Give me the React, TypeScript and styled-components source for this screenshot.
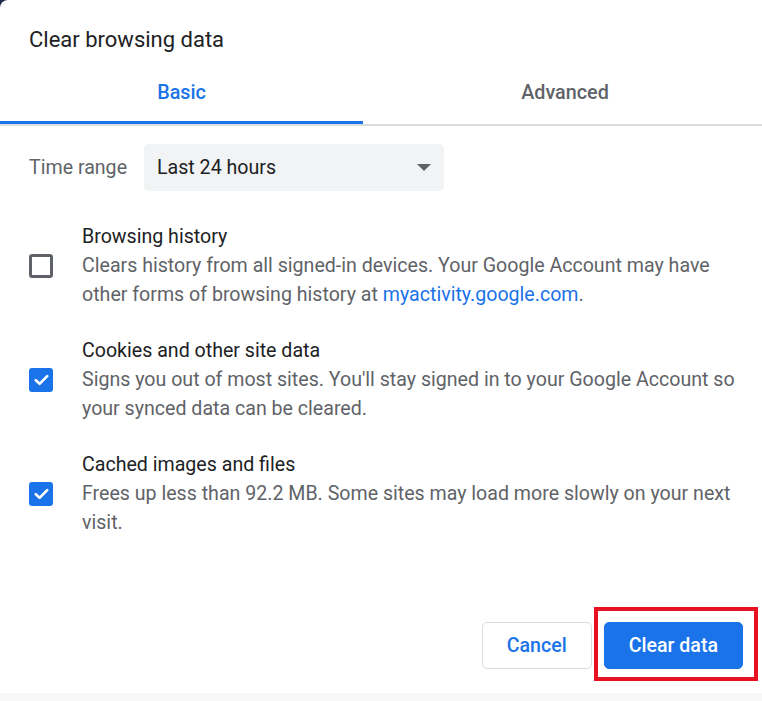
import React, { useState } from 'react';
import styled, { createGlobalStyle } from 'styled-components';

const GlobalStyle = createGlobalStyle`
  html, body {
    margin: 0;
    padding: 0;
    background: #1c2b4b;
  }
  body {
    font-family: Roboto, "Liberation Sans", Arial, sans-serif;
    -webkit-font-smoothing: antialiased;
  }
`;

type Item = {
  id: string;
  title: string;
  description: React.ReactNode;
  checked: boolean;
};

// built lazily so the styled Link below exists by the time this runs
const makeItems = (): Item[] => [
  {
    id: 'history',
    title: 'Browsing history',
    description: (
      <>
        Clears history from all signed-in devices. Your Google Account may have
        other forms of browsing history at{' '}
        <Link href="#">myactivity.google.com</Link>.
      </>
    ),
    checked: false,
  },
  {
    id: 'cookies',
    title: 'Cookies and other site data',
    description:
      "Signs you out of most sites. You'll stay signed in to your Google Account so your synced data can be cleared.",
    checked: true,
  },
  {
    id: 'cache',
    title: 'Cached images and files',
    description:
      'Frees up less than 92.2 MB. Some sites may load more slowly on your next visit.',
    checked: true,
  },
];

function CheckBox({ checked, onToggle }: { checked: boolean; onToggle: () => void }) {
  return (
    <Box $checked={checked} onClick={onToggle} role="checkbox" aria-checked={checked}>
      {checked && (
        <svg width="15" height="12" viewBox="0 0 15 12">
          <path
            d="M1.8 6.2 L5.6 9.8 L13.2 2.2"
            fill="none"
            stroke="#fff"
            strokeWidth="2.6"
            strokeLinecap="round"
            strokeLinejoin="round"
          />
        </svg>
      )}
    </Box>
  );
}

function App() {
  const [tab, setTab] = useState<'basic' | 'advanced'>('basic');
  const [items, setItems] = useState(makeItems);

  const toggle = (id: string) =>
    setItems((prev) =>
      prev.map((it) => (it.id === id ? { ...it, checked: !it.checked } : it)),
    );

  return (
    <>
      <GlobalStyle />
      <Page>
        <Dialog>
          <Title>Clear browsing data</Title>
          <TabBar>
            <Tab $active={tab === 'basic'} $first onClick={() => setTab('basic')}>
              Basic
            </Tab>
            <Tab $active={tab === 'advanced'} onClick={() => setTab('advanced')}>
              Advanced
            </Tab>
          </TabBar>

          <Content>
            <RangeRow>
              <RangeLabel>Time range</RangeLabel>
              <Select>
                <span>Last 24 hours</span>
                <Arrow />
              </Select>
            </RangeRow>

            <List>
              {items.map((it) => (
                <Row key={it.id}>
                  <CheckBox checked={it.checked} onToggle={() => toggle(it.id)} />
                  <RowText>
                    <RowTitle>{it.title}</RowTitle>
                    <RowDesc>{it.description}</RowDesc>
                  </RowText>
                </Row>
              ))}
            </List>
          </Content>

          <Footer>
            <Button>Cancel</Button>
            <Highlight>
              <Button $primary>Clear data</Button>
            </Highlight>
          </Footer>
        </Dialog>
        <Strip />
      </Page>
    </>
  );
}

export default App;

const Page = styled.div`
  width: 762px;
  height: 701px;
  display: flex;
  flex-direction: column;
  overflow: hidden;
`;

const Dialog = styled.div`
  height: 693px;
  background: #fff;
  border-top-left-radius: 8px;
  display: flex;
  flex-direction: column;
`;

const Strip = styled.div`
  flex: 1;
  background: #f8f8f8;
`;

const Title = styled.h1`
  margin: 0;
  padding: 28px 29px 0;
  font-size: 22px;
  line-height: 24px;
  font-weight: 400;
  color: #202124;
`;

const TabBar = styled.div`
  display: flex;
  margin-top: 12px;
  border-bottom: 2px solid #dadce0;
`;

const Tab = styled.div<{ $active: boolean; $first?: boolean }>`
  ${({ $first }) => ($first ? 'width: 363px;' : 'flex: 1; padding-left: 5px;')}
  height: 57px;
  padding-top: 1px;
  box-sizing: content-box;
  margin-top: -1px;
  display: flex;
  align-items: center;
  justify-content: center;
  font-size: 19.8px;
  font-weight: 500;
  cursor: pointer;
  color: ${({ $active }) => ($active ? '#1a73e8' : '#5f6368')};
  border-bottom: 3px solid ${({ $active }) => ($active ? '#1a73e8' : 'transparent')};
`;

const Content = styled.div`
  padding: 18px 20px 0 29px;
`;

const RangeRow = styled.div`
  display: flex;
  align-items: center;
  gap: 17px;
`;

const RangeLabel = styled.span`
  font-size: 19.6px;
  color: #5f6368;
`;

const Select = styled.div`
  width: 300px;
  height: 47px;
  box-sizing: border-box;
  padding: 0 13px;
  border-radius: 5px;
  background: #f1f3f4;
  display: flex;
  align-items: center;
  justify-content: space-between;
  font-size: 19.6px;
  color: #202124;
`;

const Arrow = styled.span`
  width: 0;
  height: 0;
  border-left: 7px solid transparent;
  border-right: 7px solid transparent;
  border-top: 7px solid #5f6368;
`;

const List = styled.div`
  margin-top: 31px;
  display: flex;
  flex-direction: column;
  gap: 27px;
`;

const Row = styled.div`
  display: flex;
  align-items: center;
  gap: 29px;
`;

const Box = styled.div<{ $checked: boolean }>`
  flex: none;
  width: 24px;
  height: 24px;
  box-sizing: border-box;
  border-radius: 3px;
  display: flex;
  align-items: center;
  justify-content: center;
  cursor: pointer;
  background: ${({ $checked }) => ($checked ? '#1a73e8' : '#fff')};
  border: ${({ $checked }) => ($checked ? 'none' : '3px solid #5f6368')};
`;

const RowText = styled.div`
  display: flex;
  flex-direction: column;
  line-height: 29px;
  font-size: 19.6px;
`;

const RowTitle = styled.div`
  color: #202124;
`;

const RowDesc = styled.div`
  color: #5f6368;
`;

const Link = styled.a`
  color: #1a73e8;
  text-decoration: none;
`;

const Footer = styled.div`
  margin-top: auto;
  display: flex;
  justify-content: flex-end;
  gap: 12px;
  padding: 0 19px 24px;
`;

const Highlight = styled.div`
  position: relative;
  display: flex;

  &::after {
    content: '';
    position: absolute;
    top: -15px;
    left: -10px;
    right: -15px;
    bottom: -12px;
    border: 4px solid #e81123;
    pointer-events: none;
  }
`;

const Button = styled.button<{ $primary?: boolean }>`
  height: 47px;
  padding: 0 24px;
  border-radius: 5px;
  font-family: inherit;
  font-size: 19.6px;
  font-weight: 500;
  cursor: pointer;
  border: 1px solid ${({ $primary }) => ($primary ? '#1a73e8' : '#dadce0')};
  background: ${({ $primary }) => ($primary ? '#1a73e8' : '#fff')};
  color: ${({ $primary }) => ($primary ? '#fff' : '#1a73e8')};
`;
